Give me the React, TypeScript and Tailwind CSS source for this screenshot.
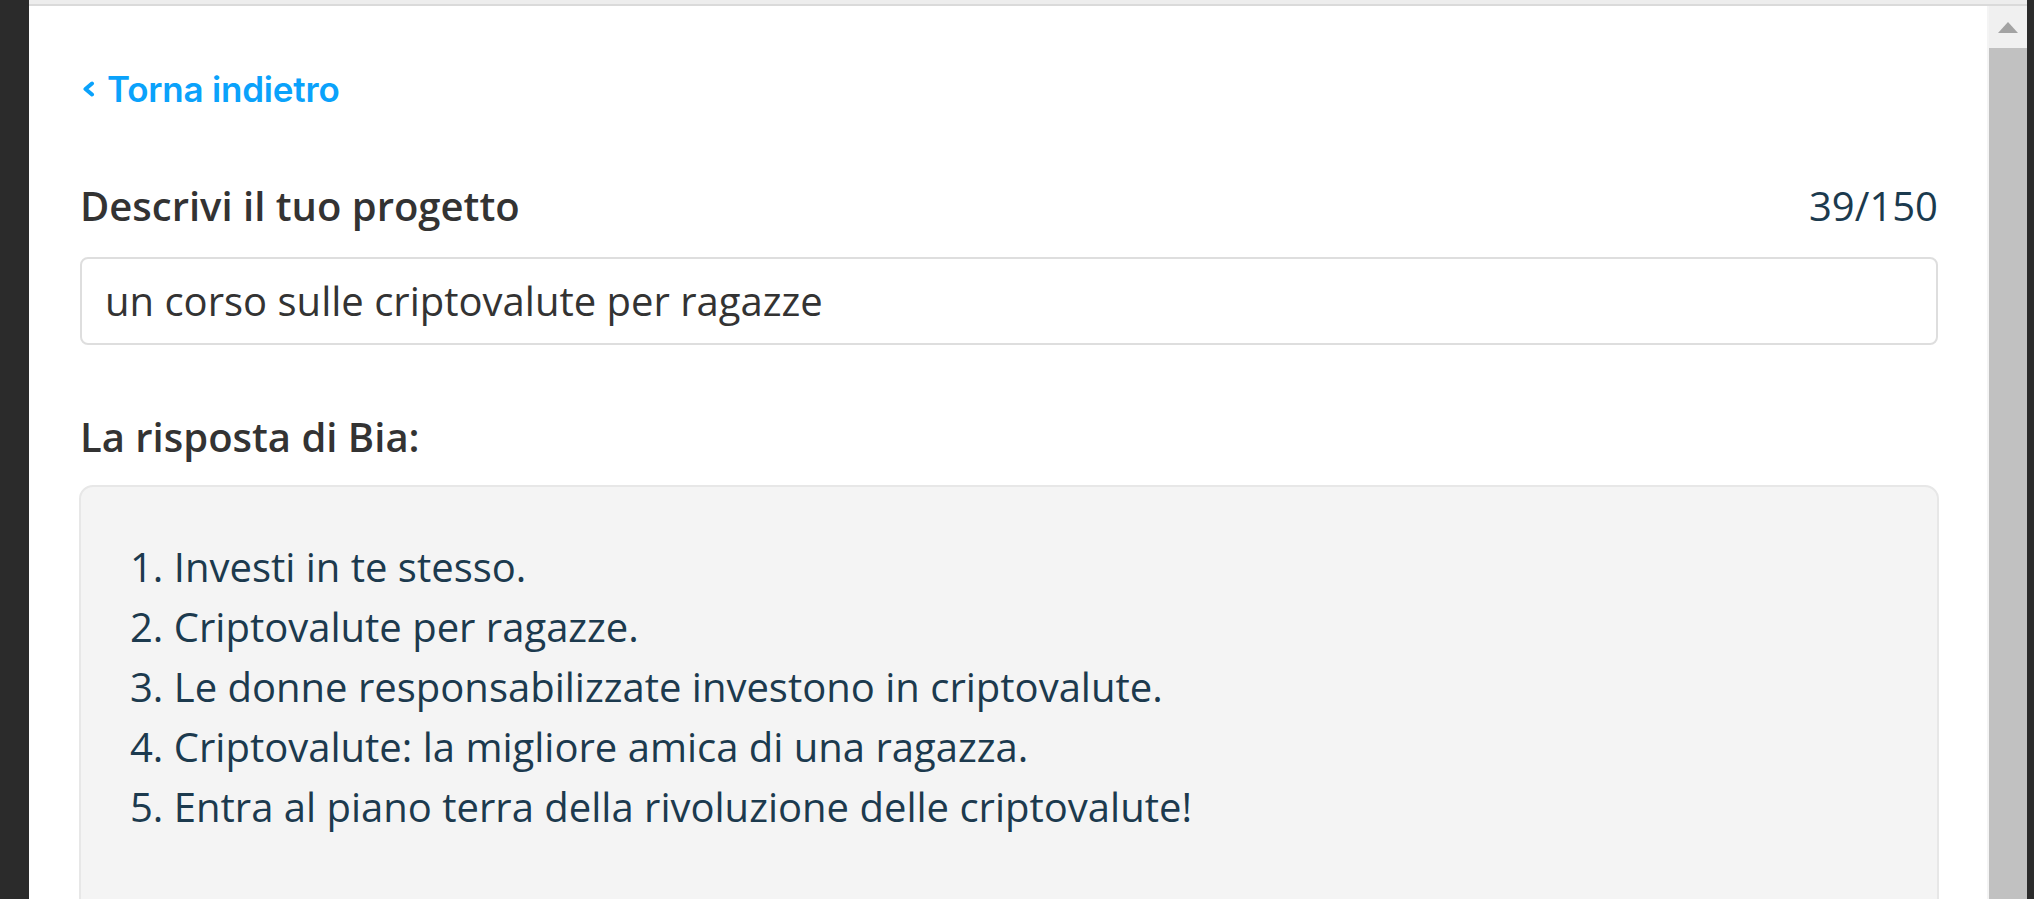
const ideas = [
  "Investi in te stesso.",
  "Criptovalute per ragazze.",
  "Le donne responsabilizzate investono in criptovalute.",
  "Criptovalute: la migliore amica di una ragazza.",
  "Entra al piano terra della rivoluzione delle criptovalute!",
];

export default function App() {
  return (
    <div className="flex h-[899px] w-full overflow-hidden bg-[#2b2b2b] font-['Open_Sans',sans-serif]">
      <div className="w-[29px] shrink-0" />

      <div className="flex min-w-0 flex-1 flex-col">
        {/* top edge of the window */}
        <div className="h-[6px] shrink-0 border-b-2 border-[#dadada] bg-[#ededed]" />

        <div className="flex min-h-0 flex-1">
          {/* Content */}
          <main className="min-w-0 flex-1 bg-white pl-[51px] pr-[49px]">
            <a
              href="#"
              className="mt-[63px] flex h-[40px] items-center gap-[12px] font-['Inter',sans-serif] text-[35px] font-semibold tracking-[-0.2px] text-[#0aa2fb]"
            >
              <svg width="13" height="16" viewBox="0 0 13 16" className="ml-[2px]">
                <polyline points="10,2.5 3.5,8 10,13.5" fill="none" stroke="currentColor" strokeWidth="4" strokeLinecap="round" strokeLinejoin="round" />
              </svg>
              <span>Torna indietro</span>
            </a>

            <div className="mt-[73px] flex h-[48px] items-center justify-between">
              <h2 className="text-[40px] font-semibold text-[#333333]">Descrivi il tuo progetto</h2>
              <span className="text-[40px] text-[#1b3a4e]">39/150</span>
            </div>

            <div className="mt-[27px] flex h-[88px] items-center rounded-[8px] border-2 border-[#dedede] px-[23px]">
              <span className="text-[40px] text-[#333333]">un corso sulle criptovalute per ragazze</span>
            </div>

            <h3 className="mt-[68px] flex h-[48px] items-center text-[40px] font-semibold text-[#333333]">
              La risposta di Bia:
            </h3>

            <div className="-mx-[1px] mt-[24px] h-[500px] rounded-[14px] border-2 border-[#e7e7e7] bg-[#f4f4f4] pl-[49px] pt-[50px]">
              <ol className="list-inside list-decimal text-[40px] leading-[60px] text-[#1c3a4e]">
                {ideas.map((idea) => (
                  <li key={idea}>{idea}</li>
                ))}
              </ol>
            </div>
          </main>

          {/* Scrollbar */}
          <div className="flex w-[40px] shrink-0 flex-col border-l-2 border-[#f4f4f4] bg-[#c1c1c1]">
            <div className="flex h-[42px] items-center justify-center bg-[#f0f0f0]">
              <svg width="20" height="11" viewBox="0 0 20 11">
                <polygon points="10,0 20,11 0,11" fill="#a3a3a3" />
              </svg>
            </div>
          </div>
        </div>
      </div>

      <div className="w-[7px] shrink-0" />
    </div>
  );
}
